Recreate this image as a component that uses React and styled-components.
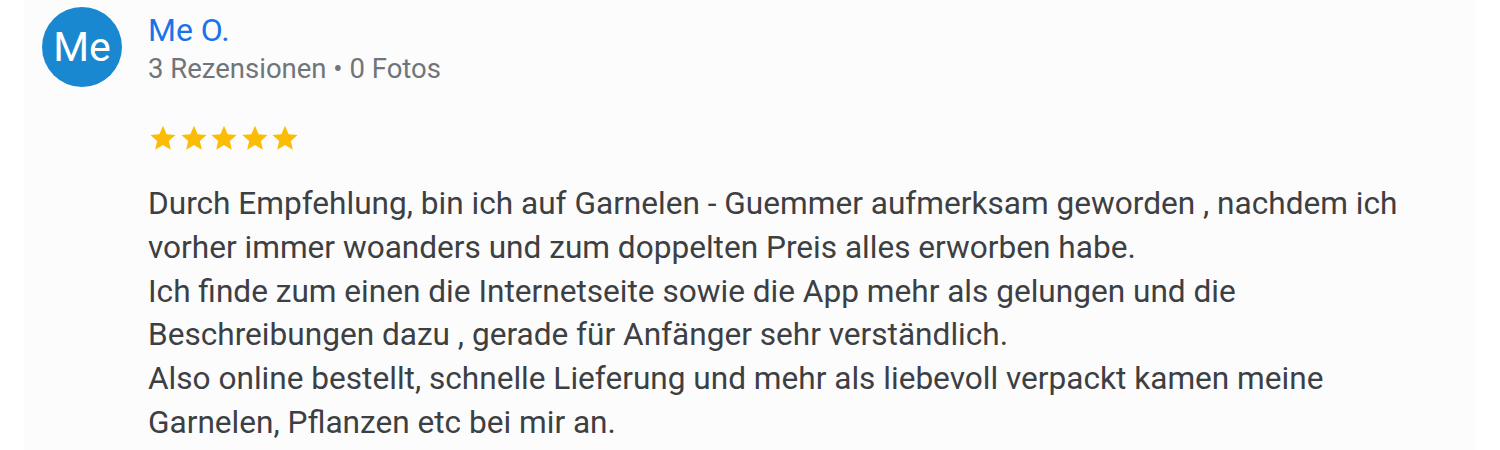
import React from 'react'
import styled, { createGlobalStyle } from 'styled-components'

const GlobalStyle = createGlobalStyle`
	body {
		margin: 0;
		background: #ffffff;
		font-family: Roboto, "Liberation Sans", Arial, sans-serif;
	}
`

const review = {
	initials: 'Me',
	name: 'Me O.',
	meta: '3 Rezensionen • 0 Fotos',
	rating: 5,
	paragraphs: [
		'Durch Empfehlung, bin ich auf Garnelen - Guemmer aufmerksam geworden , nachdem ich vorher immer woanders und zum doppelten Preis alles erworben habe.',
		'Ich finde zum einen die Internetseite sowie die App mehr als gelungen und die Beschreibungen dazu , gerade für Anfänger sehr verständlich.',
		'Also online bestellt, schnelle Lieferung und mehr als liebevoll verpackt kamen meine Garnelen, Pflanzen etc bei mir an.',
	],
}

const Star = () => (
	<svg width="28" height="28" viewBox="0 0 24 24">
		<path
			fill="#fbbc04"
			d="M12 1.6l3.1 7.1 7.7.7-5.8 5.1 1.7 7.6L12 18.1l-6.7 4 1.7-7.6-5.8-5.1 7.7-.7z"
		/>
	</svg>
)

const App = () => {
	return (
		<>
			<GlobalStyle />
			<Panel>
				<Header>
					<Avatar>{review.initials}</Avatar>
					<Author>
						<Name>{review.name}</Name>
						<Meta>{review.meta}</Meta>
					</Author>
				</Header>
				<Stars>
					{Array.from({ length: review.rating }).map((_, i) => (
						<Star key={i} />
					))}
				</Stars>
				<Body>
					{review.paragraphs.map((p, i) => (
						<p key={i}>{p}</p>
					))}
				</Body>
			</Panel>
		</>
	)
}

export default App

const Panel = styled.div`
	margin: 0 24px;
	height: 450px;
	background: #fcfcfd;
	padding: 7px 0 0 18px;
	box-sizing: border-box;
	overflow: hidden;
`
const Header = styled.div`
	display: flex;
	align-items: flex-start;
	gap: 26px;
`
const Avatar = styled.div`
	width: 80px;
	height: 80px;
	border-radius: 50%;
	background: #1a88d0;
	color: #ffffff;
	font-size: 41px;
	display: flex;
	align-items: center;
	justify-content: center;
	flex-shrink: 0;
`
const Author = styled.div`
	display: flex;
	flex-direction: column;
	padding-top: 5px;
`
const Name = styled.div`
	color: #1a73e8;
	font-size: 32px;
	line-height: 36px;
`
const Meta = styled.div`
	color: #70757a;
	font-size: 27.5px;
	line-height: 32px;
	margin-top: 5px;
`
const Stars = styled.div`
	display: flex;
	gap: 2.5px;
	margin: 37px 0 0 107px;
	height: 28px;
`
const Body = styled.div`
	margin: 30px 0 0 106px;
	max-width: 1262px;
	color: #3c4043;
	font-size: 31.6px;
	line-height: 43.8px;

	p {
		margin: 0;
	}
`
